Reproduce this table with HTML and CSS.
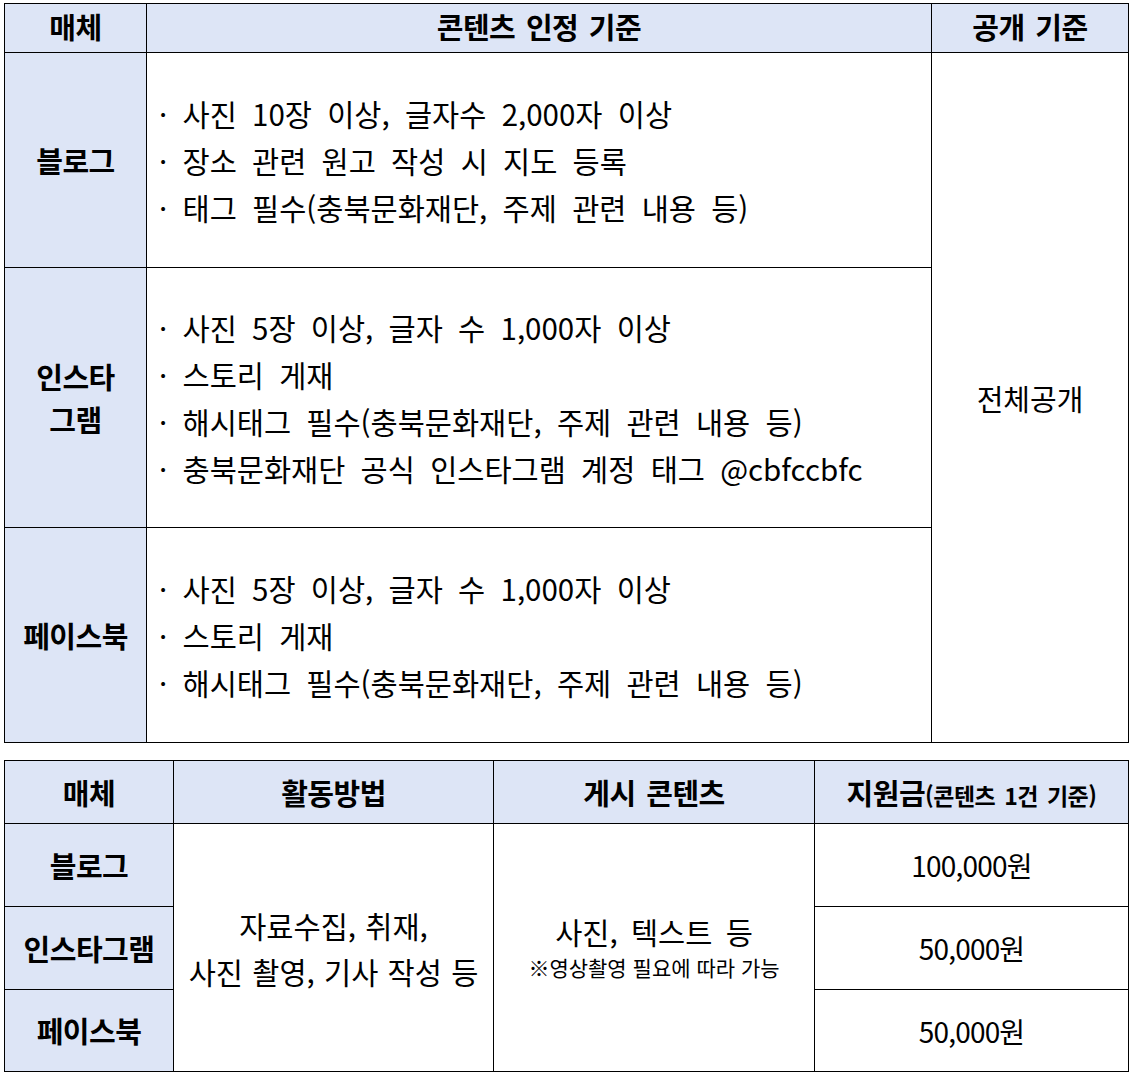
FILE: index.html
```html
<!DOCTYPE html>
<html lang="ko">
<head>
<meta charset="utf-8">
<link rel="stylesheet" href="styles.css">
</head>
<body>
<div class="page">
  <table class="t1">
    <colgroup><col class="c1a"><col class="c1b"><col class="c1c"></colgroup>
    <tr class="head1">
      <th>매체</th><th>콘텐츠 인정 기준</th><th>공개 기준</th>
    </tr>
    <tr class="r1">
      <th class="label">블로그</th>
      <td class="list">
        <div>· 사진 10장 이상, 글자수 2,000자 이상</div>
        <div>· 장소 관련 원고 작성 시 지도 등록</div>
        <div>· 태그 필수(충북문화재단, 주제 관련 내용 등)</div>
      </td>
      <td class="open" rowspan="3">전체공개</td>
    </tr>
    <tr class="r2">
      <th class="label two">인스타<br>그램</th>
      <td class="list">
        <div>· 사진 5장 이상, 글자 수 1,000자 이상</div>
        <div>· 스토리 게재</div>
        <div>· 해시태그 필수(충북문화재단, 주제 관련 내용 등)</div>
        <div>· 충북문화재단 공식 인스타그램 계정 태그 @cbfccbfc</div>
      </td>
    </tr>
    <tr class="r3">
      <th class="label">페이스북</th>
      <td class="list">
        <div>· 사진 5장 이상, 글자 수 1,000자 이상</div>
        <div>· 스토리 게재</div>
        <div>· 해시태그 필수(충북문화재단, 주제 관련 내용 등)</div>
      </td>
    </tr>
  </table>

  <table class="t2">
    <colgroup><col class="c2a"><col class="c2b"><col class="c2c"><col class="c2d"></colgroup>
    <tr class="head2">
      <th>매체</th><th>활동방법</th><th>게시 콘텐츠</th><th>지원금<span class="small">(콘텐츠 1건 기준)</span></th>
    </tr>
    <tr class="row2">
      <th class="label">블로그</th>
      <td class="method" rowspan="3">자료수집, 취재,<br>사진 촬영, 기사 작성 등</td>
      <td class="content" rowspan="3"><div class="big">사진, 텍스트 등</div><div class="note">※영상촬영 필요에 따라 가능</div></td>
      <td class="money">100,000원</td>
    </tr>
    <tr class="row2">
      <th class="label">인스타그램</th>
      <td class="money">50,000원</td>
    </tr>
    <tr class="row2 last">
      <th class="label">페이스북</th>
      <td class="money">50,000원</td>
    </tr>
  </table>
</div>
</body>
</html>
```

FILE: styles.css
```css
html, body {
  margin: 0;
  padding: 0;
  background: #ffffff;
}
body {
  font-family: "Noto Sans CJK KR", "Noto Sans", sans-serif;
  color: #000000;
}
.page {
  padding: 3px 3px 0 4px;
  display: flex;
  flex-direction: column;
  gap: 17px;
}
table {
  border-collapse: collapse;
  table-layout: fixed;
  width: 1124px;
}
th, td {
  border: 1px solid #000000;
  padding: 0;
  text-align: center;
  vertical-align: middle;
}
th {
  background: #dde5f6;
  font-weight: 700;
  font-size: 29px;
  letter-spacing: -0.5px;
  word-spacing: 3px;
}
.c1a { width: 142px; }
.c1b { width: 785px; }
.c1c { width: 197px; }
.head1 { height: 49px; }
.head1 th { line-height: 34px; padding-bottom: 4px; }
.r1 { height: 215px; }
.r2 { height: 260px; }
.r3 { height: 215px; }
.label { line-height: 43px; }
.list {
  text-align: left;
  padding-left: 12px;
  font-size: 29.5px;
  line-height: 47px;
  word-spacing: 7px;
  font-weight: 400;
}
.open {
  font-size: 29px;
  font-weight: 400;
}
.c2a { width: 169px; }
.c2b { width: 320px; }
.c2c { width: 321px; }
.c2d { width: 314px; }
.head2 { height: 63px; }
.small { font-size: 23px; letter-spacing: -0.5px; }
.row2 { height: 83px; }
.row2.last { height: 82px; }
.method {
  font-size: 29.5px;
  line-height: 46px;
  word-spacing: 1px;
}
.content {
  padding-bottom: 4px;
}
.content .big {
  font-size: 29.5px;
  line-height: 42px;
  word-spacing: 5px;
}
.content .note {
  font-size: 21px;
  line-height: 30px;
}
.money {
  font-size: 28px;
  letter-spacing: -0.8px;
}
```
